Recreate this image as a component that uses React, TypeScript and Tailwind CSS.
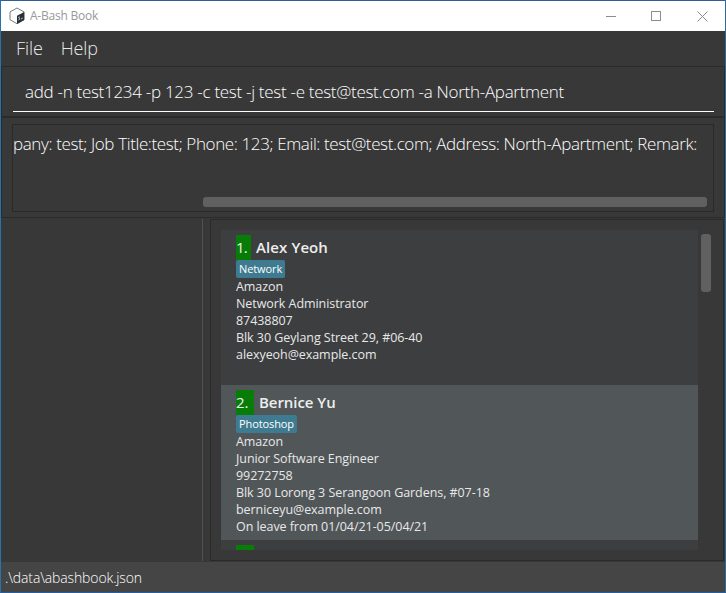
type Person = {
  id: number;
  name: string;
  tag: string;
  details: string[];
  selected?: boolean;
};

const people: Person[] = [
  {
    id: 1,
    name: 'Alex Yeoh',
    tag: 'Network',
    details: ['Amazon', 'Network Administrator', '87438807', 'Blk 30 Geylang Street 29, #06-40', 'alexyeoh@example.com'],
  },
  {
    id: 2,
    name: 'Bernice Yu',
    tag: 'Photoshop',
    details: [
      'Amazon',
      'Junior Software Engineer',
      '99272758',
      'Blk 30 Lorong 3 Serangoon Gardens, #07-18',
      'berniceyu@example.com',
      'On leave from 01/04/21-05/04/21',
    ],
    selected: true,
  },
];

function AppIcon() {
  return (
    <svg width="17" height="18" viewBox="0 0 17 18" fill="none">
      <path d="M8 1 L15 4.9 V12.7 L8 16.7 L1 12.7 V4.9 Z" fill="#fff" stroke="#666c6e" strokeWidth="0.9" />
      <path d="M8 8.8 L15.2 4.9 V12.9 L8 16.9 Z" fill="#293137" />
      <path d="M9.4 10.4 L10.8 9.8 M9.4 13 L10.8 12.3 M12 12 L13.8 11 M9.8 10.3 L10.8 12.3" stroke="#dfe3e4" strokeWidth="0.8" />
    </svg>
  );
}

function TitleBar() {
  return (
    <header className="flex h-[30px] shrink-0 items-center bg-white pl-[8px]">
      <AppIcon />
      <span className="ml-[4px] text-[12px] tracking-[-0.22px] text-[#969a9a]">A-Bash Book</span>
      <div className="ml-auto flex items-center pr-[17px] text-[#8c8c8c]">
        <svg width="10" height="10" shapeRendering="crispEdges">
          <path d="M0 5.5H10" stroke="currentColor" />
        </svg>
        <svg className="ml-[35px]" width="11" height="11" shapeRendering="crispEdges">
          <rect x="0.5" y="0.5" width="9" height="9" fill="none" stroke="currentColor" />
        </svg>
        <svg className="ml-[35px]" width="11" height="11">
          <path d="M0.5 0.5L10.5 10.5M10.5 0.5L0.5 10.5" stroke="currentColor" />
        </svg>
      </div>
    </header>
  );
}

function PersonCard({ person }: { person: Person }) {
  return (
    <li className={`flex h-[155px] shrink-0 flex-col px-[15px] py-[5px] ${person.selected ? 'bg-[#515658]' : 'bg-[#3c3e3f]'}`}>
      <div className="flex h-[25px] shrink-0 items-center text-[15px] text-[#eeeeee]">
        <span className={`h-[25px] bg-[#077d07] leading-[25px] ${person.id === 1 ? 'w-[15px] tracking-[-0.8px]' : 'w-[18px]'}`}>
          {person.id}.
        </span>
        <span className={`ml-[5px] font-semibold whitespace-nowrap ${person.id === 1 ? 'tracking-[0.1px]' : 'tracking-[-0.05px]'}`}>
          {person.name}
        </span>
      </div>
      <span className="flex h-[18px] shrink-0 items-center self-start rounded-[2px] bg-[#3e7b91] px-[3px] text-[11px] tracking-[-0.1px] text-white">
        {person.tag}
      </span>
      {person.details.map((line) => (
        <span key={line} className="h-[17px] shrink-0 text-[12.5px] leading-[17px] tracking-[-0.06px] whitespace-nowrap text-[#e8e8e8]">
          {line}
        </span>
      ))}
    </li>
  );
}

export default function App() {
  return (
    <div className="flex h-[593px] w-[726px] flex-col overflow-hidden border border-t-[#2f5e9b] border-r-[#286b9e] border-b-[#285d9b] border-l-[#2873ab] bg-[#383838] font-['Open_Sans','Noto_Sans',sans-serif]">
      <TitleBar />
      <nav className="flex h-[35px] shrink-0 items-center gap-[18px] pl-[15px] text-[18px] font-light text-[#e8e8e8]">
        <span className="tracking-[-0.1px]">File</span>
        <span className="tracking-[-0.1px]">Help</span>
      </nav>
      <section className="h-[52px] shrink-0 border-x border-t border-b-2 border-[#2b2b2b] px-[11px]">
        <div className="mr-[-1px] flex h-[45px] items-center border-b border-white pt-[5px] pl-[12px] text-[17px] font-light whitespace-nowrap text-white">
          <span className="tracking-[-0.29px]">add -n test1234 -p 123 -c test -j test -e test@test.com -a North-Apartment</span>
        </div>
      </section>
      <section className="h-[100px] shrink-0 border-x border-b border-[#2b2b2b] px-[10px] pt-[6px]">
        <div className="flex h-[88px] w-[702px] flex-col overflow-hidden border border-[#2a2a2a]">
          <span className="mt-[7px] text-[17px] leading-6 font-light tracking-[-0.38px] whitespace-nowrap text-white">
            pany: test; Job Title:test; Phone: 123; Email: test@test.com; Address: North-Apartment; Remark:
          </span>
          <div className="mt-auto mr-[6px] mb-[4px] h-[10px] w-[504px] self-end rounded-[3px] bg-[#606060]" />
        </div>
      </section>
      <main className="flex h-[344px] shrink-0 pt-px">
        <div className="h-[342px] w-[202px] border-r border-[#515151]" />
        <div className="ml-[7px] h-[342px] w-[514px] border border-[#2a2a2a] pt-[10px] pl-[10px]">
          <div className="flex">
            <ul className="flex h-[320px] w-[477px] flex-col overflow-hidden bg-[#3c3e3f]">
              {people.map((person) => (
                <PersonCard key={person.id} person={person} />
              ))}
              <li className="h-[10px] shrink-0 pt-[5px] pl-[15px]">
                <div className="h-[5px] w-[18px] bg-[#077d07]" />
              </li>
            </ul>
            <div className="mt-[4px] ml-[3px] h-[58px] w-[10px] rounded-[3px] bg-[#606060]" />
          </div>
        </div>
      </main>
      <footer className="flex grow items-center bg-[#454545] pl-[4px] text-[14px] font-light text-white">
        <span className="tracking-[-0.13px]">.\data\abashbook.json</span>
      </footer>
    </div>
  );
}
